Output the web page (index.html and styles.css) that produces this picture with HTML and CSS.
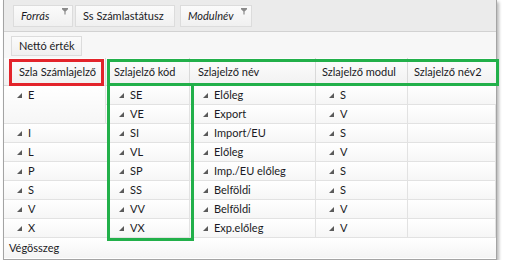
FILE: index.html
```html
<!DOCTYPE html>
<html lang="hu">
<head>
<meta charset="utf-8">
<title>Pivot</title>
<link rel="stylesheet" href="styles.css">
</head>
<body>
<div class="window">
  <div class="filter-bar">
    <div class="field italic">Forrás<span class="funnel"><svg width="6" height="7" viewBox="0 0 6 7"><path d="M0 0h6v1.2L3.6 3.4V6.5H2.4V3.4L0 1.2z" fill="#8a8a8a"/></svg></span></div>
    <div class="field">Ss Számlastátusz</div>
    <div class="field italic wide">Modulnév<span class="funnel"><svg width="6" height="7" viewBox="0 0 6 7"><path d="M0 0h6v1.2L3.6 3.4V6.5H2.4V3.4L0 1.2z" fill="#8a8a8a"/></svg></span></div>
  </div>
  <div class="data-bar">
    <div class="field">Nettó érték</div>
  </div>
  <div class="grid">
    <div class="hcell">Szla Számlajelző</div>
    <div class="hcell">Szlajelző kód</div>
    <div class="hcell">Szlajelző név</div>
    <div class="hcell">Szlajelző modul</div>
    <div class="hcell">Szlajelző név2</div>

    <div class="cell span2"><span class="inner"><i class="tri"></i>E</span></div>
    <div class="cell"><i class="tri"></i>SE</div>
    <div class="cell"><i class="tri"></i>Előleg</div>
    <div class="cell"><i class="tri"></i>S</div>
    <div class="cell"></div>
    <div class="cell"><i class="tri"></i>VE</div>
    <div class="cell"><i class="tri"></i>Export</div>
    <div class="cell"><i class="tri"></i>V</div>
    <div class="cell"></div>

    <div class="cell"><i class="tri"></i>I</div>
    <div class="cell"><i class="tri"></i>SI</div>
    <div class="cell"><i class="tri"></i>Import/EU</div>
    <div class="cell"><i class="tri"></i>S</div>
    <div class="cell"></div>

    <div class="cell"><i class="tri"></i>L</div>
    <div class="cell"><i class="tri"></i>VL</div>
    <div class="cell"><i class="tri"></i>Előleg</div>
    <div class="cell"><i class="tri"></i>V</div>
    <div class="cell"></div>

    <div class="cell"><i class="tri"></i>P</div>
    <div class="cell"><i class="tri"></i>SP</div>
    <div class="cell"><i class="tri"></i>Imp./EU előleg</div>
    <div class="cell"><i class="tri"></i>S</div>
    <div class="cell"></div>

    <div class="cell"><i class="tri"></i>S</div>
    <div class="cell"><i class="tri"></i>SS</div>
    <div class="cell"><i class="tri"></i>Belföldi</div>
    <div class="cell"><i class="tri"></i>S</div>
    <div class="cell"></div>

    <div class="cell"><i class="tri"></i>V</div>
    <div class="cell"><i class="tri"></i>VV</div>
    <div class="cell"><i class="tri"></i>Belföldi</div>
    <div class="cell"><i class="tri"></i>V</div>
    <div class="cell"></div>

    <div class="cell"><i class="tri"></i>X</div>
    <div class="cell"><i class="tri"></i>VX</div>
    <div class="cell"><i class="tri"></i>Exp.előleg</div>
    <div class="cell"><i class="tri"></i>V</div>
    <div class="cell"></div>

    <div class="total">Végösszeg</div>
  </div>
  <div class="mark red"></div>
  <div class="mark green-h"></div>
  <div class="mark green-v"></div>
</div>
</body>
</html>
```
FILE: styles.css
```css
html, body {
  margin: 0;
  padding: 0;
  background: #ffffff;
}
body {
  font-family: "Lato", "Open Sans", "DejaVu Sans", sans-serif;
  font-size: 11px;
  color: #1a1a24;
}
.window {
  position: relative;
  box-sizing: border-box;
  margin-left: 3px;
  width: 494px;
  height: 260px;
  border: 1px solid #a4a4a4;
  border-top: none;
  background: #ffffff;
  box-shadow: 2px 2px 3px rgba(0, 0, 0, 0.28);
}
.filter-bar {
  display: flex;
  gap: 2px;
  box-sizing: border-box;
  height: 32px;
  padding: 5px 0 0 9px;
  background: #ebebeb;
  border-bottom: 1px solid #d2d2d2;
}
.data-bar {
  display: flex;
  box-sizing: border-box;
  height: 26px;
  padding: 4px 0 0 7px;
  background: #f7f7f7;
}
.field {
  position: relative;
  box-sizing: border-box;
  height: 22px;
  line-height: 20px;
  padding: 0 10px 0 7px;
  background: linear-gradient(#fbfbfb, #f0f0f0);
  border: 1px solid #dcdcdc;
  white-space: nowrap;
}
.filter-bar .field:first-child { width: 60px; }
.filter-bar .field:nth-child(2) { width: 100px; }
.filter-bar .field.wide { width: 72px; margin-left: 3px; }
.data-bar .field { height: 20px; line-height: 18px; width: 71px; }
.italic { font-style: italic; }
.funnel {
  position: absolute;
  top: 2px;
  right: 4px;
  line-height: 0;
}
.grid {
  display: grid;
  grid-template-columns: 102px 84px 126px 92px 88px;
  grid-template-rows: 28px repeat(8, 19px) 20px;
}
.hcell {
  box-sizing: border-box;
  padding: 0 0 0 15px;
  line-height: 27px;
  background: linear-gradient(#fdfdfd, #f1f1f1);
  border-right: 1px solid #d9d9d9;
  border-bottom: 1px solid #d9d9d9;
  white-space: nowrap;
}
.hcell:nth-child(2) { padding-left: 8px; }
.hcell:nth-child(3) { padding-left: 8px; }
.hcell:nth-child(4) { padding-left: 6px; }
.hcell:nth-child(5) { padding-left: 6px; border-right: none; }
.cell {
  box-sizing: border-box;
  display: flex;
  align-items: center;
  padding-left: 13px;
  line-height: 18px;
  background: linear-gradient(#ffffff, #f6f6f6);
  border-right: 1px solid #e2e2e2;
  border-bottom: 1px solid #e2e2e2;
  white-space: nowrap;
}
.cell:nth-child(5n) { border-right: none; }
.span2 {
  grid-row: span 2;
  align-items: flex-start;
}
.inner {
  display: flex;
  align-items: center;
  height: 18px;
}
.tri {
  display: inline-block;
  width: 0;
  height: 0;
  margin-right: 6px;
  border-left: 5px solid transparent;
  border-bottom: 5px solid #5a5a5a;
}
.total {
  grid-column: 1 / -1;
  padding-left: 5px;
  line-height: 19px;
  background: linear-gradient(#ffffff, #f4f4f4);
}
.mark {
  position: absolute;
  box-sizing: border-box;
  border: 3px solid;
}
.red {
  left: 5px;
  top: 59px;
  width: 95px;
  height: 27px;
  border-color: #e3242b;
}
.green-h {
  left: 103px;
  top: 59px;
  width: 392px;
  height: 27px;
  border-color: #22b04a;
}
.green-v {
  left: 103px;
  top: 83px;
  width: 87px;
  height: 158px;
  border-color: #22b04a;
}
```
